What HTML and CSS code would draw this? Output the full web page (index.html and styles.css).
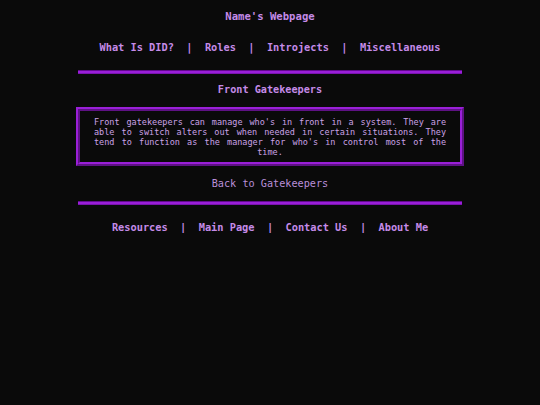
FILE: index.html
```html
<!DOCTYPE html>
<html>
<head>
<meta charset="utf-8">
<title>Front Gatekeepers</title>
<link rel="stylesheet" href="styles.css">
</head>
<body>
<div class="page">
  <h1 class="title">Name's Webpage</h1>
  <nav class="nav top-nav"><a href="#">What Is DID?</a>  |  <a href="#">Roles</a>  |  <a href="#">Introjects</a>  |  <a href="#">Miscellaneous</a></nav>
  <hr class="rule rule-top">
  <h2 class="heading">Front Gatekeepers</h2>
  <div class="box">
    <p class="text">Front gatekeepers can manage who's in front in a system. They are able to switch alters out when needed in certain situations. They tend to function as the manager for who's in control most of the time.</p>
  </div>
  <a class="back" href="#">Back to Gatekeepers</a>
  <hr class="rule rule-bottom">
  <nav class="nav bottom-nav"><a href="#">Resources</a>  |  <a href="#">Main Page</a>  |  <a href="#">Contact Us</a>  |  <a href="#">About Me</a></nav>
</div>
</body>
</html>
```
FILE: styles.css
```css
html, body {
  margin: 0;
  padding: 0;
  background: #0a0a0a;
}
body {
  font-family: "DejaVu Sans Mono", monospace;
  color: #c58be8;
}
.page {
  width: 388px;
  margin: 0 auto;
  display: flex;
  flex-direction: column;
  align-items: center;
}
.title {
  margin: 10px 0 0;
  font-size: 10.6px;
  line-height: 12px;
  font-weight: bold;
  color: #c58be8;
}
.nav {
  white-space: pre;
  font-size: 10.3px;
  line-height: 12px;
  font-weight: bold;
  color: #c58be8;
}
.nav a {
  color: #c58be8;
  text-decoration: none;
}
.top-nav {
  margin-top: 19px;
}
.rule {
  width: 384px;
  height: 2px;
  margin: 0;
  border: 0;
  border-top: 1px solid #62088f;
  border-bottom: 1px solid #7a14b0;
  background: #9a1fd8;
}
.rule-top {
  margin-top: 17px;
}
.heading {
  margin: 10px 0 0;
  font-size: 10.2px;
  line-height: 12px;
  font-weight: bold;
  color: #c58be8;
}
.box {
  margin-top: 11px;
  width: 352px;
  padding: 6px 14px 5px;
  border: 4px ridge #9a1fd8;
}
.text {
  margin: 0;
  font-size: 8.5px;
  line-height: 10px;
  text-align: justify;
  text-align-last: center;
  color: #caa2e6;
}
.back {
  margin-top: 12px;
  font-size: 10.2px;
  line-height: 12px;
  color: #b98fd8;
  text-decoration: none;
}
.rule-bottom {
  margin-top: 11px;
}
.bottom-nav {
  margin-top: 16px;
}
```
